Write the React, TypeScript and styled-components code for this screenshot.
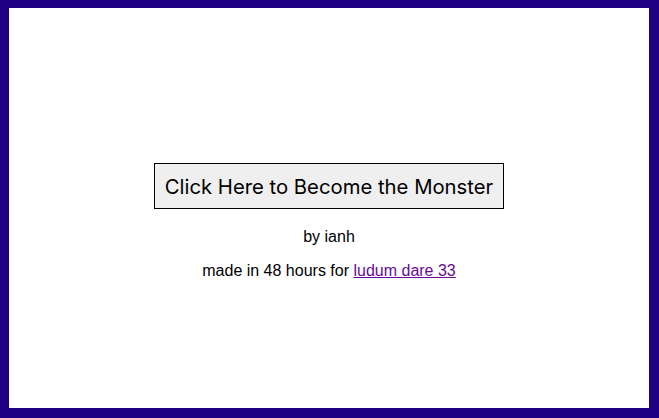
import React from 'react'
import styled, { createGlobalStyle } from 'styled-components'

const GlobalStyle = createGlobalStyle`
  html {
    background: #1f0084;
  }
  body {
    margin: 8px 0 0 0;
    font-family: "Liberation Sans", Arial, sans-serif;
  }
`

const Stage = styled.div`
  width: 640px;
  height: 400px;
  margin: 0 auto 0 9px;
  background: #ffffff;
  display: flex;
  flex-direction: column;
  align-items: center;
  padding-top: 155px;
  box-sizing: border-box;
`

const StartButton = styled.button`
  font-family: Inter, "Noto Sans", sans-serif;
  font-size: 20.3px;
  color: #000;
  background: #efefef;
  border: 1px solid #000;
  border-radius: 0;
  height: 46px;
  padding: 0 10px;
  cursor: pointer;
`

const Credit = styled.p`
  margin: 0;
  font-size: 16px;
  color: #000;
  margin-top: ${(p: { gap: number }) => p.gap}px;
  line-height: 18px;
`

const Link = styled.a`
  color: #660b96;
`

export default function App() {
  return (
    <>
      <GlobalStyle />
      <Stage>
        <StartButton>Click Here to Become the Monster</StartButton>
        <Credit gap={19}>by ianh</Credit>
        <Credit gap={16}>
          made in 48 hours for <Link href="#">ludum dare 33</Link>
        </Credit>
      </Stage>
    </>
  )
}
